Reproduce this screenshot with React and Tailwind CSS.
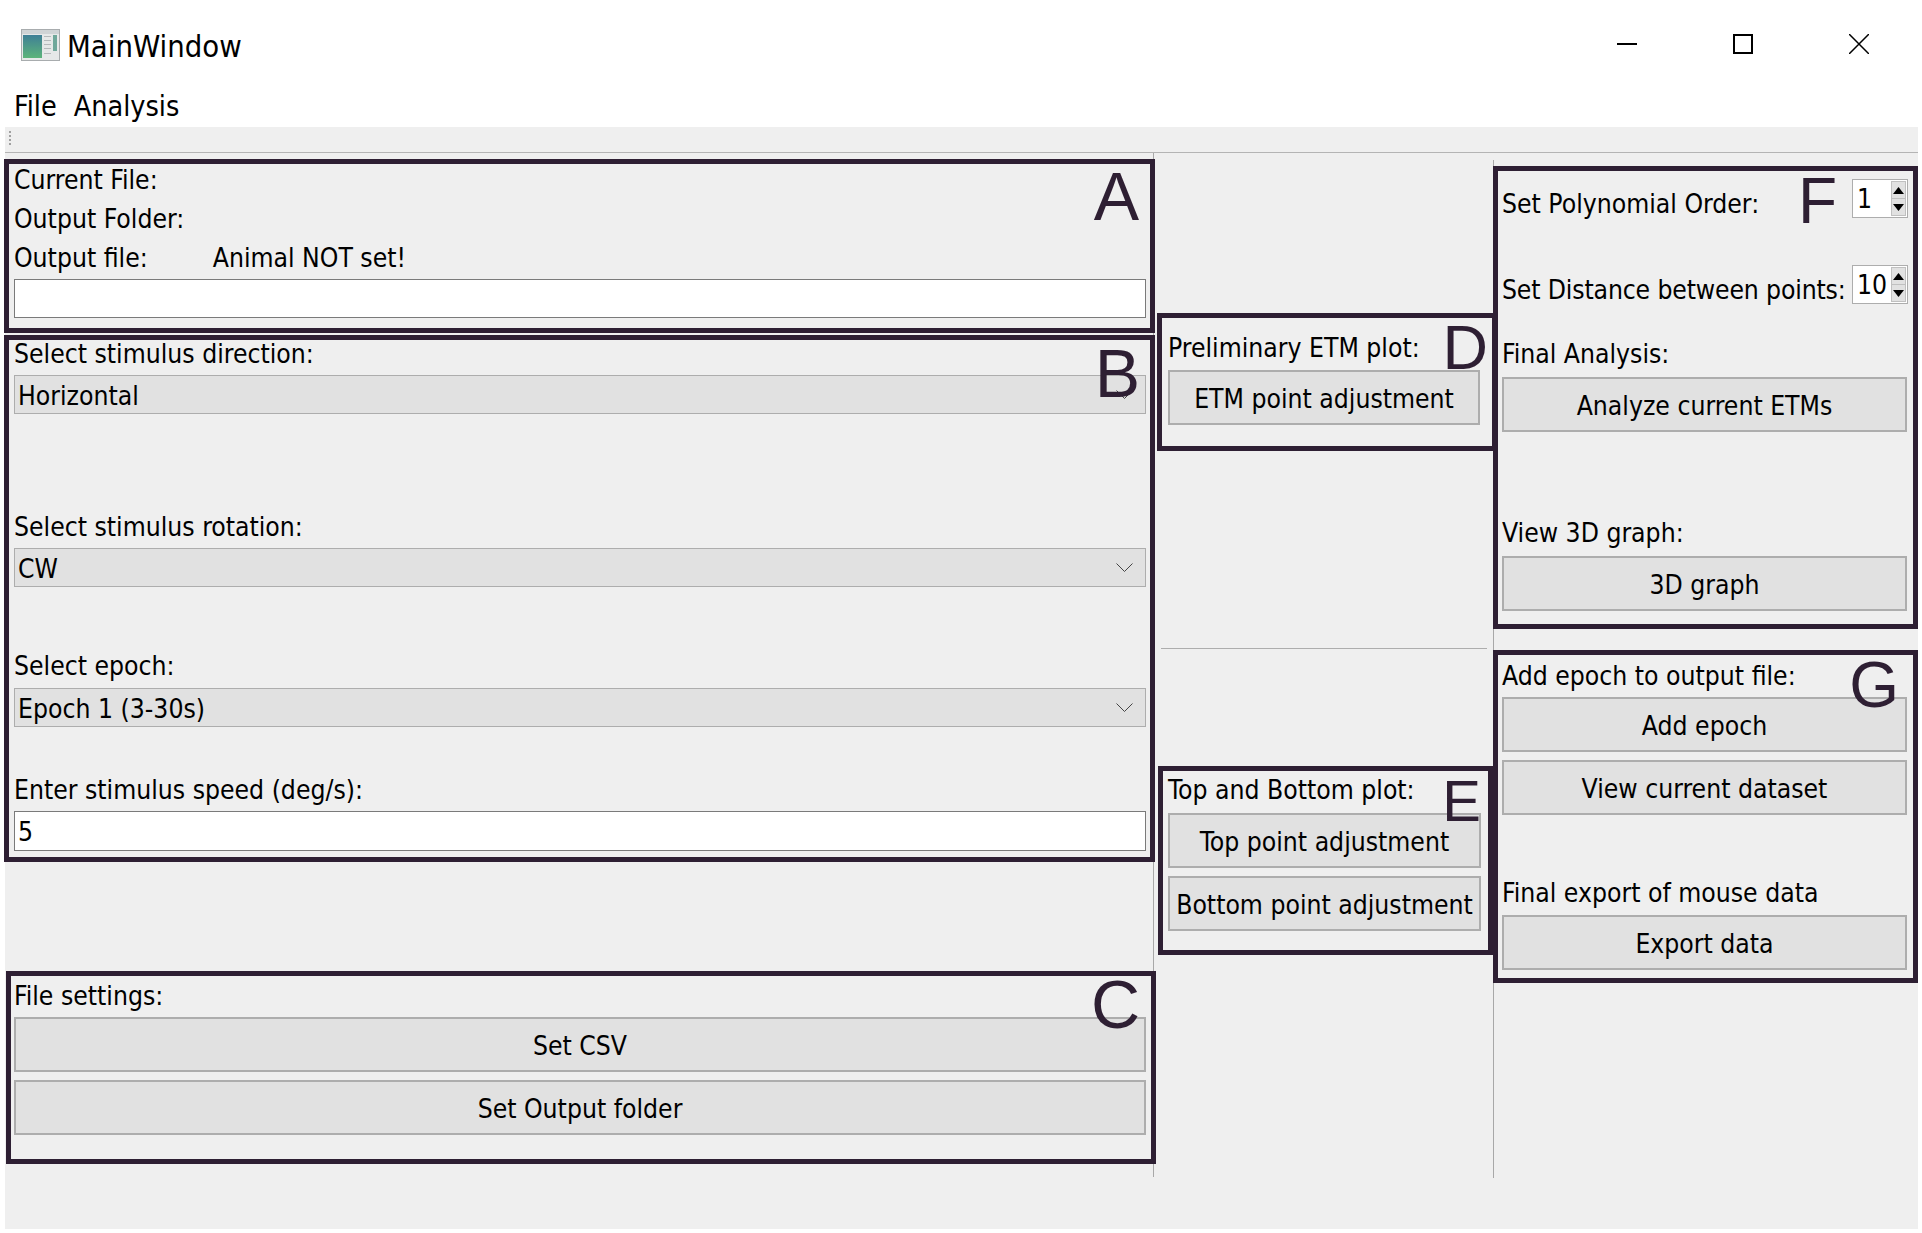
const boxBorder = "relative border-[5px] border-[#2e1f33]";
const letter = "absolute font-['Liberation_Sans',sans-serif] text-[#2e1f33] leading-none";

function Label({ children, className = "" }) {
  return <div className={`flex items-center h-[39px] pt-[5px] whitespace-nowrap ${className}`}>{children}</div>;
}

function Btn({ children, className = "" }) {
  return (
    <div className={`flex items-center justify-center h-[55px] pt-[5px] bg-[#e1e1e1] border-2 border-[#adadad] ${className}`}>
      {children}
    </div>
  );
}

function Combo({ value, className = "" }) {
  return (
    <div className={`flex items-center justify-between h-[39px] pl-[3px] pr-[12px] bg-[#e1e1e1] border border-[#adadad] ${className}`}>
      <span className="pt-[4px]">{value}</span>
      <svg width="17" height="9" viewBox="0 0 17 9" fill="none" stroke="#444" strokeWidth="1">
        <path d="M0.5 0.5L8.5 8.5L16.5 0.5" />
      </svg>
    </div>
  );
}

function TextBox({ value, className = "" }) {
  return <div className={`flex items-center pl-[3px] pt-[4px] bg-white border border-[#7a7a7a] ${className}`}>{value}</div>;
}

function Spin({ value, className = "" }) {
  return (
    <div className={`flex justify-between items-center w-[56px] h-[39px] pl-[4px] pr-[1px] bg-white border border-[#adadad] ${className}`}>
      <span className="pt-[2px]">{value}</span>
      <div className="flex flex-col w-[15px] h-[35px] bg-[#e1e1e1] border border-[#c0c0c0] divide-y divide-[#c0c0c0]">
        <div className="flex-1 flex items-center justify-center">
          <svg width="11" height="7" viewBox="0 0 11 7"><path d="M5.5 0L11 7H0z" fill="#000" /></svg>
        </div>
        <div className="flex-1 flex items-center justify-center">
          <svg width="11" height="7" viewBox="0 0 11 7"><path d="M0 0h11L5.5 7z" fill="#000" /></svg>
        </div>
      </div>
    </div>
  );
}

function WindowIcon() {
  return (
    <svg width="39" height="32" viewBox="0 0 39 32">
      <defs>
        <linearGradient id="pane" x1="0" y1="0" x2="0" y2="1">
          <stop offset="0" stopColor="#3f7f96" />
          <stop offset="1" stopColor="#5cb47a" />
        </linearGradient>
      </defs>
      <rect x="0.5" y="0.5" width="38" height="31" fill="#e6e8e8" stroke="#a8acae" />
      <rect x="1" y="1" width="37" height="4" fill="#cfd3d5" />
      <rect x="2" y="6" width="19" height="23" fill="url(#pane)" />
      <rect x="23" y="7" width="7" height="1" fill="#b5b9bb" />
      <rect x="23" y="11" width="7" height="1" fill="#b5b9bb" />
      <rect x="23" y="15" width="7" height="1" fill="#b5b9bb" />
      <rect x="23" y="19" width="7" height="1" fill="#b5b9bb" />
      <rect x="23" y="24" width="7" height="1" fill="#b5b9bb" />
      <rect x="32" y="6" width="4" height="16" fill="#6fa79a" />
    </svg>
  );
}

export default function App() {
  return (
    <div className="w-[1922px] h-[1233px] overflow-hidden bg-white text-black text-[26.3px] [font-stretch:condensed] font-['DejaVu_Sans',sans-serif]">
      {/* Title bar */}
      <div className="flex items-center justify-between h-[90px] pl-[21px]">
        <div className="flex items-center gap-[7px] text-[30.7px]">
          <WindowIcon />
          <span className="pt-[4px]">MainWindow</span>
        </div>
        <div className="flex items-center pr-[50px] gap-[96px] mr-[3px] -mt-[2px]">
          <svg width="20" height="20" viewBox="0 0 20 20" fill="none" stroke="#000" strokeWidth="2">
            <path d="M0 10H20" />
          </svg>
          <svg width="20" height="20" viewBox="0 0 20 20" fill="none" stroke="#000" strokeWidth="2">
            <rect x="1" y="1" width="18" height="18" />
          </svg>
          <svg width="20" height="20" viewBox="0 0 20 20" fill="none" stroke="#000" strokeWidth="1.5">
            <path d="M0 0L20 20M20 0L0 20" />
          </svg>
        </div>
      </div>
      <div className="flex gap-[17px] h-[33px] mb-[4px] pl-[14px] pt-[2px] items-center text-[28.5px]">
        <span>File</span>
        <span>Analysis</span>
      </div>

      <div className="ml-[5px] mr-[4px] h-[1102px] bg-[#efefef]">
        {/* Toolbar */}
        <div className="h-[26px] mt-[1px] border-b border-[#b4b4b4] pl-[4px] pt-[4px]">
          <div className="w-[3px] h-[14px] border-l-2 border-dotted border-[#a0a0a0]" />
        </div>

        <div className="flex">
          {/* Left column */}
          <div className="relative -ml-[1px] w-[1150px] h-[1024px] pt-[6px] border-r border-[#a8a8a8] flex flex-col">
            <div className={`${boxBorder} w-[1151px] h-[174px] pl-[5px] pr-[4px]`}>
              <Label className="-mt-[5px]">Current File:</Label>
              <Label>Output Folder:</Label>
              <Label className="gap-[65px]">
                <span>Output file:</span>
                <span>Animal NOT set!</span>
              </Label>
              <TextBox className="h-[39px] mt-[3px]" />
              <span className={`${letter} text-[68px] right-[11px] top-[-2px]`}>A</span>
            </div>
            <div className={`${boxBorder} w-[1151px] h-[527px] mt-[2px] pl-[5px] pr-[4px]`}>
              <Label className="-mt-[7px]">Select stimulus direction:</Label>
              <Combo value="Horizontal" className="mt-[3px]" />
              <Label className="mt-[92px]">Select stimulus rotation:</Label>
              <Combo value="CW" className="mt-[3px]" />
              <Label className="mt-[58px]">Select epoch:</Label>
              <Combo value="Epoch 1 (3-30s)" className="mt-[4px]" />
              <Label className="mt-[42px]">Enter stimulus speed (deg/s):</Label>
              <TextBox value="5" className="h-[40px] mt-[3px]" />
              <span className={`${letter} text-[68px] right-[10px] top-[-1px]`}>B</span>
            </div>
            <div className={`${boxBorder} ml-[2px] w-[1150px] h-[193px] mt-[109px] pl-[3px] pr-[5px]`}>
              <Label className="mt-[-1px]">File settings:</Label>
              <Btn className="mt-[3px]">Set CSV</Btn>
              <Btn className="mt-[8px]">Set Output folder</Btn>
              <span className={`${letter} text-[68px] right-[11px] top-[-6px]`}>C</span>
            </div>
          </div>

          {/* Middle column */}
          <div className="relative w-[340px] h-[1018px] mt-[7px] border-r border-[#a8a8a8] flex flex-col">
            <div className={`${boxBorder} ml-[3px] w-[340px] h-[138px] mt-[153px] pl-[6px] pr-[12px]`}>
              <Label className="mt-[9px]">Preliminary ETM plot:</Label>
              <Btn className="mt-[4px]">ETM point adjustment</Btn>
              <span className={`${letter} text-[63px] right-[4px] top-[-2px]`}>D</span>
            </div>
            <div className="ml-[7px] w-[326px] h-px mt-[197px] bg-[#adadad]" />
            <div className={`${boxBorder} ml-[4px] w-[335px] h-[189px] mt-[117px] pl-[5px] pr-[7px]`}>
              <Label className="-mt-[2px]">Top and Bottom plot:</Label>
              <Btn className="mt-[5px]">Top point adjustment</Btn>
              <Btn className="mt-[8px]">Bottom point adjustment</Btn>
              <span className={`${letter} text-[58px] right-[7px] top-[1px]`}>E</span>
            </div>
          </div>

          {/* Right column */}
          <div className="relative w-[425px] -ml-[1px] mt-[13px] flex flex-col shrink-0">
            <div className={`${boxBorder} w-[425px] h-[463px] pl-[4px] pr-[6px]`}>
              <div className="flex justify-between items-center h-[39px] mt-[8px]">
                <span className="mt-[12px]">Set Polynomial Order:</span>
                <Spin value="1" className="-mr-[1px]" />
              </div>
              <div className="flex justify-between items-center h-[39px] mt-[47px]">
                <span className="mt-[12px] whitespace-nowrap tracking-[-0.15px]">Set Distance between points:</span>
                <Spin value="10" className="-mr-[1px]" />
              </div>
              <Label className="mt-[29px]">Final Analysis:</Label>
              <Btn className="mt-[5px]">Analyze current ETMs</Btn>
              <Label className="mt-[80px]">View 3D graph:</Label>
              <Btn className="mt-[5px]">3D graph</Btn>
              <span className={`${letter} text-[64px] right-[76px] top-[-2px]`}>F</span>
            </div>
            <div className={`${boxBorder} w-[425px] h-[333px] mt-[21px] pl-[4px] pr-[6px]`}>
              <Label className="mt-[0px]">Add epoch to output file:</Label>
              <Btn className="mt-[3px]">Add epoch</Btn>
              <Btn className="mt-[8px]">View current dataset</Btn>
              <Label className="mt-[57px]">Final export of mouse data</Label>
              <Btn className="mt-[4px]">Export data</Btn>
              <span className={`${letter} text-[64px] right-[14px] top-[-2px]`}>G</span>
            </div>
          </div>
        </div>
      </div>
    </div>
  );
}
